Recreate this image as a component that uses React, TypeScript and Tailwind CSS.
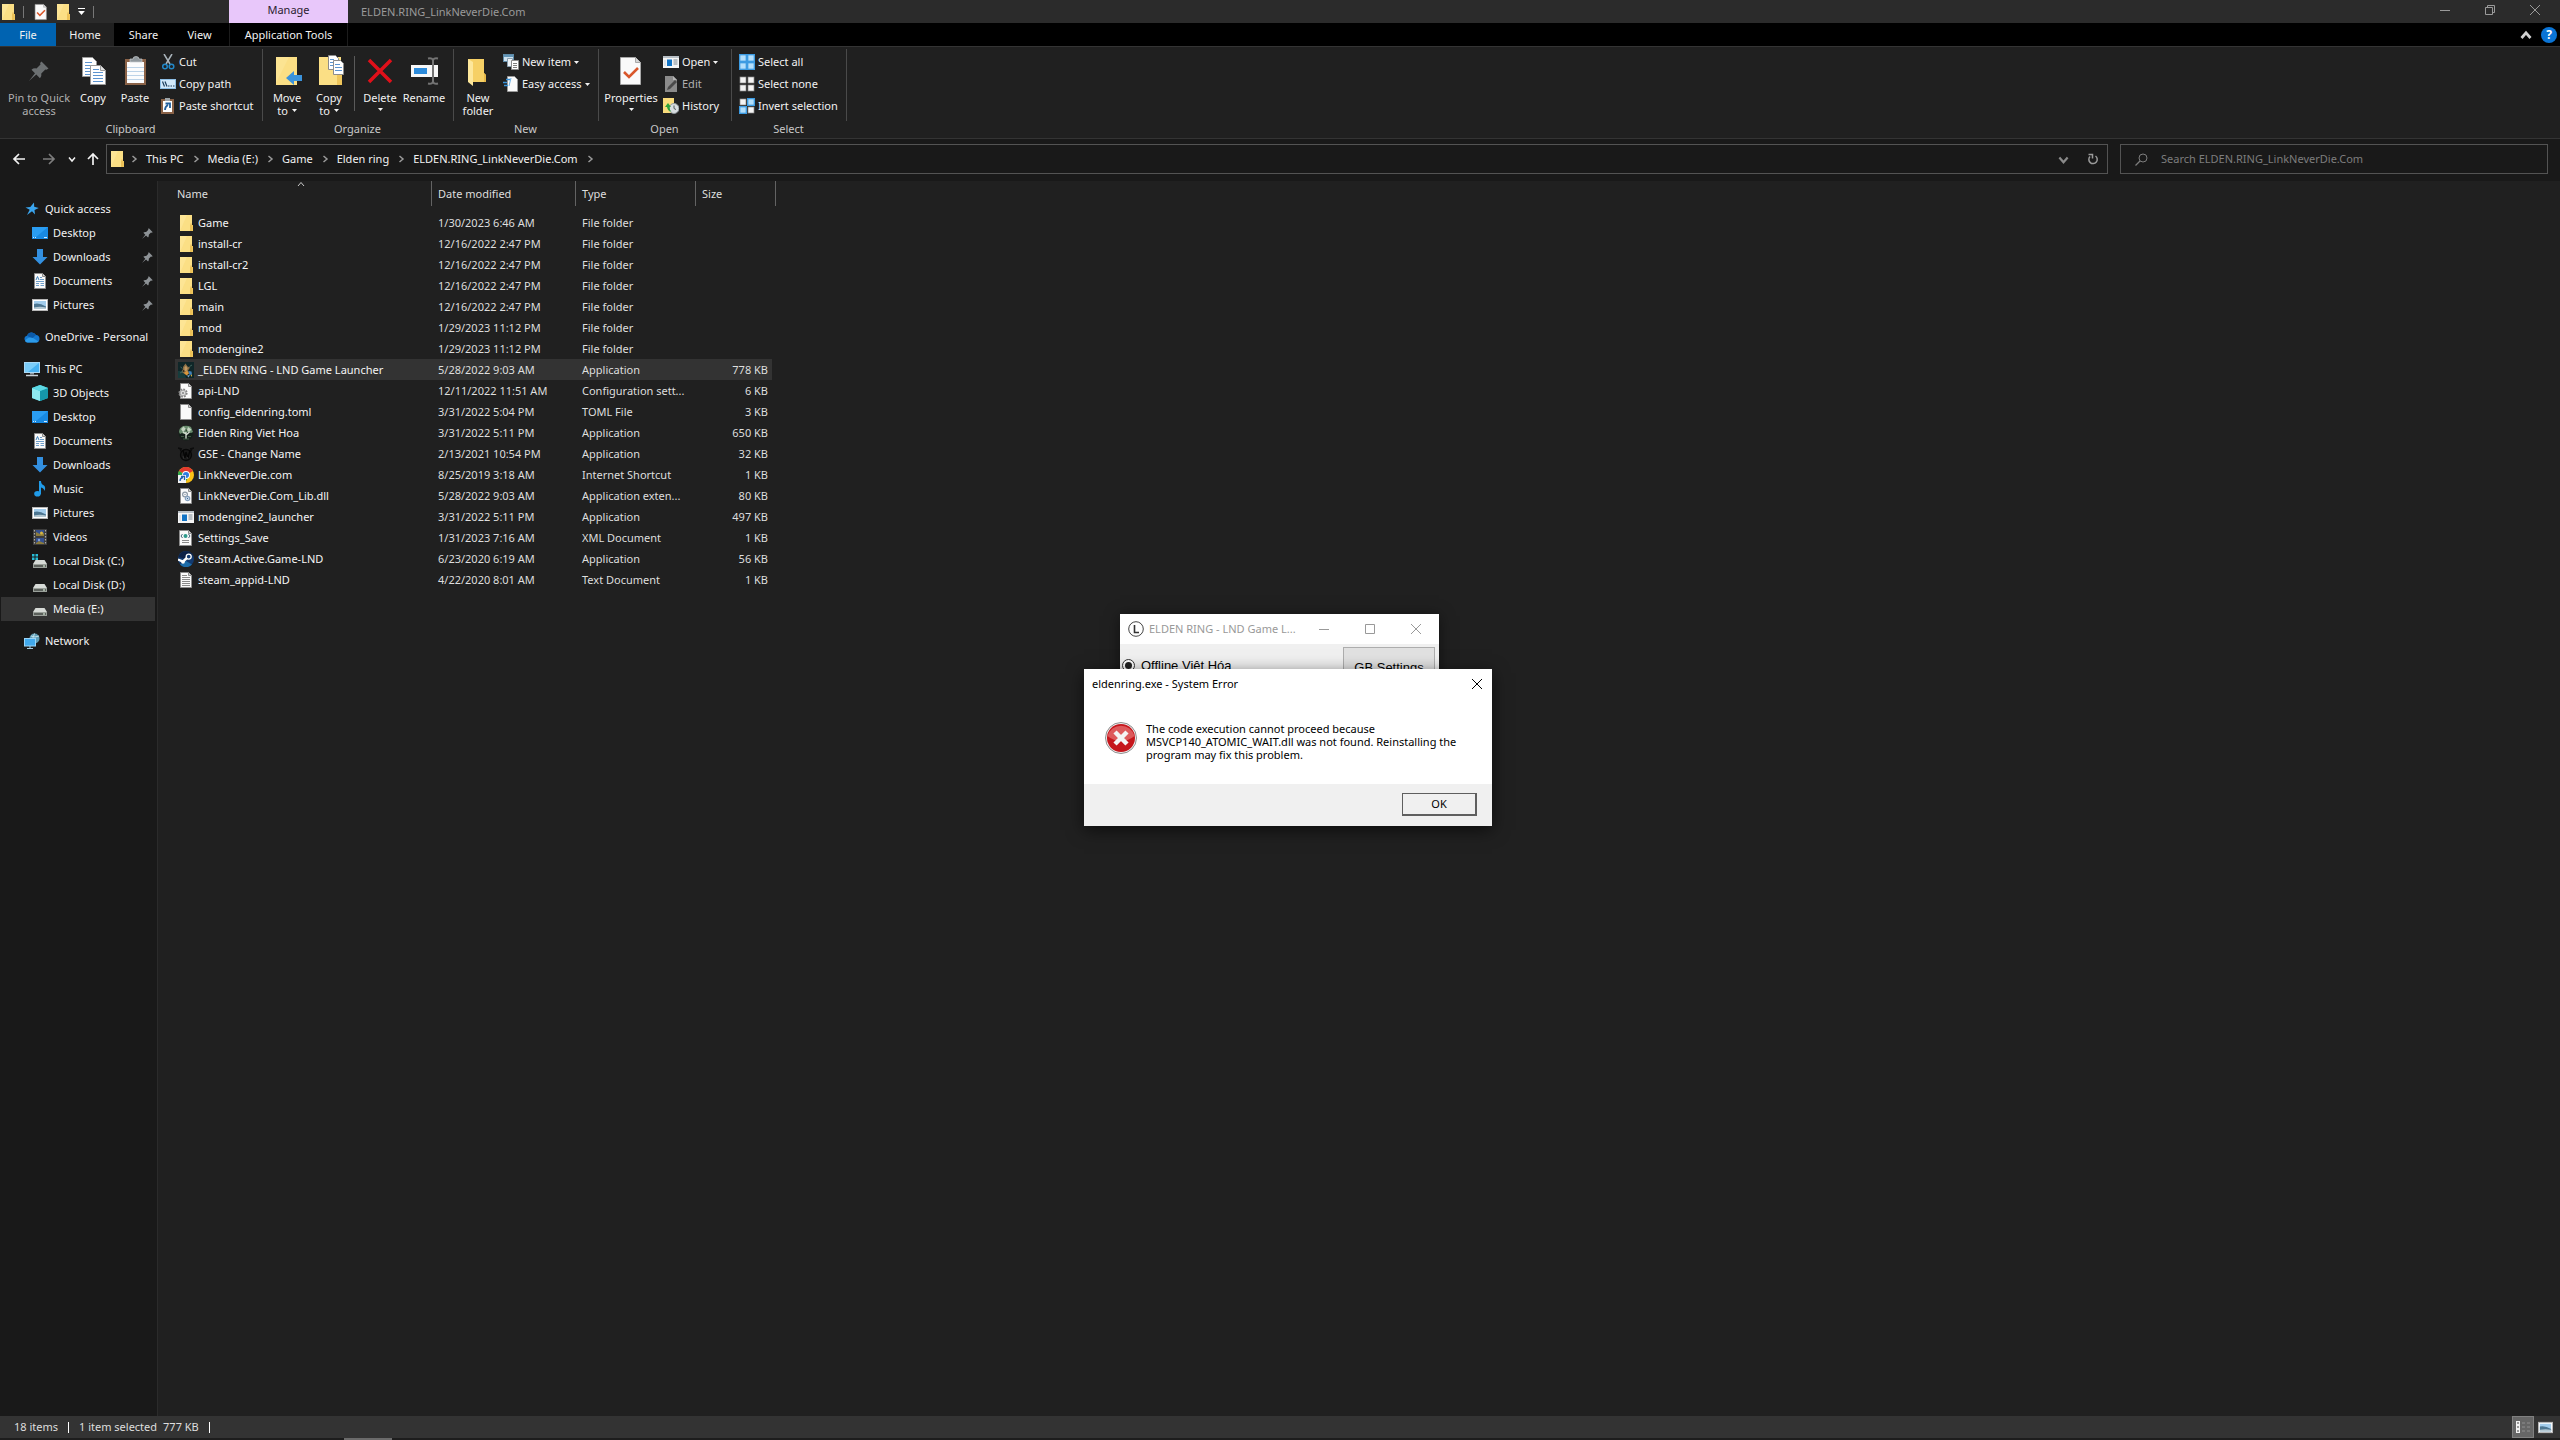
import type { ReactNode } from "react";

type IconProps = { className?: string };

/* ---------- small drawings ---------- */

function FolderIcon({ className = "w-4 h-4" }: IconProps) {
  return (
    <svg className={className} viewBox="0 0 16 16" aria-hidden="true">
      <rect x="2" y="0" width="12" height="16" fill="#fbdf85" />
      <path d="M2 0H9L2 16Z" fill="#fde79b" opacity=".7" />
      <path d="M12 10h3v6h-3z" fill="#f0c75c" />
      <path d="M12 8.500h2V16h-2z" fill="#e9bd53" opacity=".6" />
    </svg>
  );
}

function PageShape({ children, edge = "#8c8c8c" }: { children?: ReactNode; edge?: string }) {
  return (
    <>
      <path d="M2.500 .5h8l3 3v12h-11z" fill="#fafafa" stroke={edge} />
      <path d="M10.500 .5v3h3" fill="#d4d4d4" stroke={edge} />
      {children}
    </>
  );
}

function DocIcon({ className = "w-4 h-4" }: IconProps) {
  return (
    <svg className={className} viewBox="0 0 16 16" aria-hidden="true">
      <PageShape />
    </svg>
  );
}

function TextDocIcon() {
  return (
    <svg className="w-4 h-4" viewBox="0 0 16 16" aria-hidden="true">
      <PageShape>
        <path d="M4 3.500h5M4 5.500h8M4 7.500h8M4 9.500h8M4 11.500h8M4 13.500h8" stroke="#8a8a8a" />
      </PageShape>
    </svg>
  );
}

function ConfigIcon() {
  return (
    <svg className="w-4 h-4" viewBox="0 0 16 16" aria-hidden="true">
      <PageShape />
      <circle cx="5" cy="10" r="3.600" fill="#d9d9d9" stroke="#858585" strokeWidth="2" strokeDasharray="1.700 1.100" />
      <circle cx="5" cy="10" r="2.800" fill="#dcdcdc" stroke="#8b8b8b" strokeWidth=".6" />
      <circle cx="5" cy="10" r="1.100" fill="#8b8b8b" />
    </svg>
  );
}

function DllIcon() {
  return (
    <svg className="w-4 h-4" viewBox="0 0 16 16" aria-hidden="true">
      <PageShape>
        <circle cx="7" cy="6.500" r="2.400" fill="none" stroke="#8d99a5" strokeWidth="1.200" />
        <circle cx="7" cy="6.500" r=".7" fill="#8296a8" />
        <circle cx="9.500" cy="10.500" r="2.200" fill="#dbe7f3" stroke="#86a0bd" strokeWidth="1.200" />
        <circle cx="9.500" cy="10.500" r=".7" fill="#3f6d9c" />
      </PageShape>
    </svg>
  );
}

function XmlIcon() {
  return (
    <svg className="w-4 h-4" viewBox="0 0 16 16" aria-hidden="true">
      <path d="M1.500 .5h9l3 3v12h-12z" fill="#fafafa" stroke="#8c8c8c" />
      <path d="M10.500 .5v3h3" fill="#d4d4d4" stroke="#8c8c8c" />
      <circle cx="7.500" cy="6" r="2" fill="#2e9a8c" />
      <path d="M4.500 4L3 6l1.500 2M10.500 4L12 6l-1.500 2" fill="none" stroke="#44627a" />
      <path d="M4 10.500h7M4 12.500h7" stroke="#8a8a8a" />
    </svg>
  );
}

function AppIcon({ className = "w-4 h-4" }: IconProps) {
  return (
    <svg className={className} viewBox="0 0 16 16" aria-hidden="true">
      <rect x="0" y="2" width="16" height="12" fill="#f5f5f5" />
      <rect x="0" y="2" width="16" height="2" fill="#b9c0c6" />
      <rect x="4" y="5.500" width="5" height="6.500" fill="#1274c5" />
      <path d="M10.500 6h4M10.500 8h4M10.500 10h4" stroke="#7f8a94" />
      <path d="M1 6h2v6H1z" fill="#dfe3e7" />
    </svg>
  );
}

function EldenIcon() {
  return (
    <svg className="w-4 h-4" viewBox="0 0 16 16" aria-hidden="true">
      <rect width="16" height="16" fill="#0f2628" />
      <path d="M0 9h6l2 7H0z" fill="#163c3c" />
      <path d="M7.500 1.500l2 3 2.500 1-2 3 1 2-3 2-2-1-2.500-1.500 1.500-3L5 5z" fill="#8b6f46" />
      <path d="M6.500 5.500l1.500-2 1.500 3-1 2.500h-2z" fill="#c19a63" />
      <path d="M2.500 5l2 1.500M11.500 4.500L14 3M2 11l3-1.500" stroke="#40655c" />
      <path d="M6 11l3-2.500 2 3L8.500 13.500z" fill="#d9963c" />
      <path d="M10.500 9l3 .5.5 3-2.500.5z" fill="#3f82bd" />
      <path d="M9 13.500l3-.5-1.500 2.500z" fill="#77a2c4" />
      <path d="M12.500 13l1.500-.500V15z" fill="#d9b23c" />
      <path d="M5 8l2 1-2 1z" fill="#22180f" />
    </svg>
  );
}

function TreeIcon() {
  return (
    <svg className="w-4 h-4" viewBox="0 0 16 16" aria-hidden="true">
      <circle cx="8" cy="8" r="7.500" fill="#14201a" />
      <path d="M1 7q0-4 4-6 5-1 8 1l2 5-2 1-3-1-2 1-2 1-2-1-2 1z" fill="#6a8c6e" />
      <path d="M3 4l2.500-2.500L8 4 5 7zM10 2l3.500 2.500L11 7 9 5z" fill="#c4d4c1" />
      <path d="M7.500 4l1.500 1-1 2z" fill="#20331f" />
      <path d="M8 7v7M8 10l3.500-3M8 9L5 7" stroke="#d5e0d2" strokeWidth="1.300" fill="none" />
      <path d="M3 11.500h3M10 11.500h3M5 14h6" stroke="#3d573f" />
    </svg>
  );
}

function GseIcon() {
  return (
    <svg className="w-4 h-4" viewBox="0 0 16 16" aria-hidden="true">
      <path d="M0 2l4 1M16 2l-4 1M2 3l2 4M14 3l-2 4" stroke="#0c0c0c" strokeWidth="1.300" />
      <circle cx="8" cy="9" r="5.500" fill="#191919" stroke="#080808" strokeWidth="1.300" />
      <path d="M5 4l2 8 1-6 2 6 2-8" fill="none" stroke="#050505" strokeWidth="1.300" />
      <path d="M5 10l1 3M9 11l1 2" stroke="#303030" />
    </svg>
  );
}

function ChromeIcon() {
  return (
    <svg className="w-4 h-4" viewBox="0 0 16 16" aria-hidden="true">
      <circle cx="8" cy="8" r="8" fill="#fbc116" />
      <path d="M8 8L1 4A8 8 0 0 1 15 4Z" fill="#e33b2e" />
      <path d="M8 8L1 4a8 8 0 0 0 6 12l3.500-6z" fill="#2da94f" />
      <circle cx="8" cy="8" r="3.900" fill="#fff" />
      <circle cx="8" cy="8" r="3" fill="#2f7de1" />
      <rect x="0" y="8" width="8" height="8" fill="#f4f4f4" />
      <path d="M2 14q0-3 3-3.500M3 9.500h3.500V13" fill="none" stroke="#2563b0" strokeWidth="1.300" />
    </svg>
  );
}

function SteamIcon() {
  return (
    <svg className="w-4 h-4" viewBox="0 0 16 16" aria-hidden="true">
      <circle cx="8" cy="8" r="8" fill="#123a70" />
      <path d="M.5 6A8 8 0 0 1 15 4L8 8z" fill="#0c2147" />
      <path d="M2 13.500a8 8 0 0 0 12 0L8 10z" fill="#1b6ba8" />
      <path d="M0 8.500l5 2 5-4.500" fill="none" stroke="#fff" strokeWidth="2.400" />
      <circle cx="10.700" cy="5.600" r="2.500" fill="#123a70" stroke="#fff" strokeWidth="1.300" />
      <circle cx="5" cy="10.800" r="1.900" fill="#fff" />
    </svg>
  );
}

function StarIcon() {
  return (
    <svg className="w-4 h-4" viewBox="0 0 16 16" aria-hidden="true">
      <path d="M10 1.500l.2 4.300 4.600 1.200-4.300 2 .5 4.400-3-3.200-5 3.800 2.700-5.200L1.500 6.500l4.800-.5z" fill="#3aa5ee" />
    </svg>
  );
}

function DesktopIcon() {
  return (
    <svg className="w-4 h-4" viewBox="0 0 16 16" aria-hidden="true">
      <rect x="0" y="2" width="16" height="12" fill="#1889e2" />
      <path d="M0 2h16L4 12H0z" fill="#2a9df2" />
      <path d="M1 12.500h1M3 12.500h1M12 12.500h3" stroke="#cfe9ff" />
    </svg>
  );
}

function DownloadIcon() {
  return (
    <svg className="w-4 h-4" viewBox="0 0 16 16" aria-hidden="true">
      <path d="M5 0h6v8h4.500L8 15.500.5 8H5z" fill="#3390e0" />
    </svg>
  );
}

function DocumentsIcon() {
  return (
    <svg className="w-4 h-4" viewBox="0 0 16 16" aria-hidden="true">
      <PageShape>
        <path d="M8 4.500h2M8 6.500h4M4 8.500h8M4 10.500h3M4 12.500h3M8.500 12.500H12M8.500 10.500H12" stroke="#5c93c4" strokeWidth=".9" />
        <path d="M4 7l1.500-3.500L7 7" fill="none" stroke="#2f78b8" strokeWidth=".9" />
      </PageShape>
    </svg>
  );
}

function PicturesIcon({ className = "w-4 h-4" }: IconProps) {
  return (
    <svg className={className} viewBox="0 0 16 16" aria-hidden="true">
      <rect x=".5" y="2.500" width="15" height="11" fill="#fff" stroke="#b7b7b7" />
      <rect x="2" y="4" width="12" height="8" fill="#a3cdec" />
      <path d="M2 7q5-1.500 12 2.500V12H2z" fill="#4d7691" />
      <path d="M2 10.500q6-1.500 12 0V12H2z" fill="#b4c8d2" />
    </svg>
  );
}

function CloudIcon() {
  return (
    <svg className="w-4 h-4" viewBox="0 0 16 16" aria-hidden="true">
      <path d="M3.500 13.500a3.500 3.500 0 0 1-.6-6.800A5 5 0 0 1 12 6a3.800 3.800 0 0 1 .5 7.500z" fill="#1477cf" />
      <path d="M3 6.700A5 5 0 0 1 12 6L8 9.500z" fill="#0c5aa8" />
      <path d="M1 12q3-5 8-3l5.500 3.500q-1 1-2 1h-9Q2 13.500 1 12z" fill="#2c9bea" />
    </svg>
  );
}

function PcIcon() {
  return (
    <svg className="w-4 h-4" viewBox="0 0 16 16" aria-hidden="true">
      <rect x=".5" y="1.500" width="15" height="10" fill="#46b1f1" stroke="#a9d9f6" />
      <path d="M1 2h14L4 11H1z" fill="#7accf8" />
      <path d="M6 12h4v1.500H6z" fill="#8f9aa3" />
      <path d="M2 14.500h12" stroke="#c9d1d7" strokeWidth="1.500" />
    </svg>
  );
}

function CubeIcon() {
  return (
    <svg className="w-4 h-4" viewBox="0 0 16 16" aria-hidden="true">
      <path d="M8 0l8 3v10l-8 3-8-3V3z" fill="#39c4d4" />
      <path d="M0 3l8 3v10l-8-3z" fill="#8ee9ef" />
      <path d="M8 6l8-3v10l-8 3z" fill="#1597ab" />
      <path d="M8 0l8 3-8 3-8-3z" fill="#5dd8e4" />
    </svg>
  );
}

function MusicIcon() {
  return (
    <svg className="w-4 h-4" viewBox="0 0 16 16" aria-hidden="true">
      <ellipse cx="5.500" cy="12.800" rx="3.300" ry="2.800" fill="#209be8" />
      <path d="M7 0h2q0 3 3 4.500 2 2 .5 5.500-.5-3-3.500-3.500V13H7z" fill="#209be8" />
    </svg>
  );
}

function VideoIcon() {
  return (
    <svg className="w-4 h-4" viewBox="0 0 16 16" aria-hidden="true">
      <rect x="1" y="0" width="14" height="16" fill="#3c3c3c" />
      <path d="M2.500 1v14M13.500 1v14" stroke="#a9a9a9" strokeWidth="1.200" strokeDasharray="1.500 1.500" />
      <rect x="4" y="1" width="8" height="6" fill="#35508f" />
      <rect x="4" y="9" width="8" height="6" fill="#35508f" />
      <path d="M4 3l4 2 4-1v3H4zM4 14l3-2 5 2v1H4z" fill="#8b7b3c" />
      <circle cx="9.500" cy="4" r="1.500" fill="#d9b63e" />
      <circle cx="7" cy="11" r="1.200" fill="#7f9ed8" />
    </svg>
  );
}

function DiskIcon({ system = false }: { system?: boolean }) {
  return (
    <svg className="w-4 h-4" viewBox="0 0 16 16" aria-hidden="true">
      <path d="M3.500 7h9L15 11H1z" fill="#d6dad6" />
      <rect x="1" y="11" width="14" height="4" fill="#9aa09a" />
      <rect x="2" y="12" width="12" height="2" fill="#5b605b" />
      <path d="M11 13h2" stroke="#e9ffe9" />
      {system && <path d="M0 1h2.500v2.500H0zM3.500 1H6v2.500H3.500zM0 4.500h2.500V7H0zM3.500 4.500H6V7H3.500z" fill="#28bdd8" />}
    </svg>
  );
}

function NetworkIcon() {
  return (
    <svg className="w-4 h-4" viewBox="0 0 16 16" aria-hidden="true">
      <circle cx="10.500" cy="5.500" r="5" fill="#5f9db5" />
      <path d="M7 3q4 2 8 0M10.500.5q-3 4 0 9" stroke="#c3e2ec" fill="none" />
      <rect x=".5" y="5.500" width="11" height="7.500" fill="#41a9ec" stroke="#9bd5f8" />
      <path d="M3 15.500h6M6 13v2" stroke="#a7cfe5" />
    </svg>
  );
}

function PinIcon({ className = "w-3 h-3" }: IconProps) {
  return (
    <svg className={className} viewBox="0 0 20 20" aria-hidden="true">
      <path d="M12.500.5l7 7-2 1.300-1.200-.4-4 4q.6 3-1.300 4.800l-3.700-3.700L0 20l6-7.800-3.500-3.500q2-1.900 5-1.300l4-4-.4-1.400z" fill="#8d9296" />
    </svg>
  );
}

/* ribbon icons */

function CopyIcon() {
  return (
    <svg className="w-8 h-8" viewBox="0 0 32 32" aria-hidden="true">
      <path d="M5.500 2.500h10l4 4v15h-14z" fill="#fff" stroke="#9a9a9a" />
      <path d="M8 7.500h7M8 10.500h9M8 13.500h9M8 16.500h9M8 19.500h9" stroke="#5d94cf" />
      <path d="M13.500 10.500h10l5 5v14h-15z" fill="#fff" stroke="#9a9a9a" />
      <path d="M23.500 10.500v5h5" fill="#e0e0e0" stroke="#9a9a9a" />
      <path d="M16 14.500h6M16 17.500h10M16 20.500h10M16 23.500h10M16 26.500h10" stroke="#5d94cf" />
    </svg>
  );
}

function PasteIcon() {
  return (
    <svg className="w-8 h-8" viewBox="0 0 32 32" aria-hidden="true">
      <rect x="6" y="4" width="21" height="26" fill="#8a6247" />
      <rect x="8" y="7" width="17" height="21" fill="#fbfcfd" />
      <path d="M8 12.500h17M8 16.500h17M8 20.500h17M8 24.500h17" stroke="#bcd3e8" />
      <path d="M11 7V4h3q0-2.500 3-2.500T20 4h3v3z" fill="#8e969b" stroke="#c7cccf" strokeWidth=".7" />
    </svg>
  );
}

function CutIcon() {
  return (
    <svg className="w-4 h-4" viewBox="0 0 16 16" aria-hidden="true">
      <path d="M4 0l6 10M12 0L6 10" stroke="#a9b3ba" strokeWidth="1.500" />
      <circle cx="5" cy="12.500" r="2.300" fill="none" stroke="#2287c7" strokeWidth="1.500" />
      <circle cx="11.500" cy="12.500" r="2.300" fill="none" stroke="#2287c7" strokeWidth="1.500" />
    </svg>
  );
}

function CopyPathIcon() {
  return (
    <svg className="w-4 h-4" viewBox="0 0 16 16" aria-hidden="true">
      <rect x=".5" y="3.500" width="15" height="9" fill="#d2e8fa" stroke="#8fbfe6" />
      <path d="M2.500 5.500l2 5M5 5.500l2 5M8 10h1.500M10.500 10H12M13 10h1.500" stroke="#1d3d5c" strokeWidth="1.200" />
    </svg>
  );
}

function PasteShortcutIcon() {
  return (
    <svg className="w-4 h-4" viewBox="0 0 16 16" aria-hidden="true">
      <rect x="1" y="1" width="13" height="15" fill="#8a6247" />
      <rect x="3" y="3" width="9" height="11" fill="#fff" />
      <rect x="5" y="0" width="5" height="3" fill="#9da4a8" />
      <path d="M5 12q0-3.500 3-5M5.500 5.500H10V10" fill="none" stroke="#215f9d" strokeWidth="1.800" />
    </svg>
  );
}

function MoveToIcon() {
  return (
    <svg className="w-8 h-8" viewBox="0 0 32 32" aria-hidden="true">
      <rect x="5" y="2" width="21" height="28" fill="#fbdf85" />
      <path d="M5 2h13L5 28z" fill="#fde79b" opacity=".6" />
      <path d="M15 23l8-7v4h8v6h-8v4z" fill="#3b93dc" />
    </svg>
  );
}

function CopyToIcon() {
  return (
    <svg className="w-8 h-8" viewBox="0 0 32 32" aria-hidden="true">
      <rect x="6" y="2" width="22" height="28" fill="#fbdf85" />
      <path d="M24 19h5v11h-5z" fill="#efc65b" />
      <path d="M15.500.5h7l3 3v11h-10z" fill="#fff" stroke="#8c8c8c" />
      <path d="M20.500 5.500h7l3 3v11h-10z" fill="#fff" stroke="#8c8c8c" />
      <path d="M17 4.500h4M17 7.500h3M17 10.500h3M22 9.500h5M22 12.500h7M22 15.500h7" stroke="#5d94cf" />
    </svg>
  );
}

function DeleteIcon() {
  return (
    <svg className="w-8 h-8" viewBox="0 0 32 32" aria-hidden="true">
      <path d="M5 5l22 22M27 5L5 27" stroke="#e0101a" strokeWidth="3.500" />
    </svg>
  );
}

function RenameIcon() {
  return (
    <svg className="w-8 h-8" viewBox="0 0 32 32" aria-hidden="true">
      <rect x="3" y="10" width="27" height="12" fill="#f7f7f7" />
      <rect x="6" y="13" width="13" height="6" fill="#2c8bdb" />
      <path d="M25 4v24M20 3.500q5-1 5 2.500 0-3.500 5-2.500M20 28.500q5 1 5-2.500 0 3.500 5 2.500" stroke="#747474" strokeWidth="2" fill="none" />
    </svg>
  );
}

function NewFolderIcon() {
  return (
    <svg className="w-8 h-8" viewBox="0 0 32 32" aria-hidden="true">
      <path d="M6 4h16v14l2 2v7H10z" fill="#f6d065" />
      <path d="M6 4l5 3v24l-5-4z" fill="#fde79b" />
      <path d="M22 18l2 2v7h-2z" fill="#e7b948" />
    </svg>
  );
}

function PropertiesIcon({ className = "w-8 h-8" }: IconProps) {
  return (
    <svg className={className} viewBox="0 0 32 32" aria-hidden="true">
      <path d="M5.500 2.500h15l5 5v22h-20z" fill="#fafafa" stroke="#a8a8a8" />
      <path d="M20.500 2.500v5h5" fill="#d5d5d5" stroke="#a8a8a8" />
      <path d="M9 17l5 5 9-9" fill="none" stroke="#d9572b" strokeWidth="2.600" />
    </svg>
  );
}

function NewItemIcon() {
  return (
    <svg className="w-4 h-4" viewBox="0 0 16 16" aria-hidden="true">
      <rect x=".5" y=".5" width="10" height="7" fill="#cfe3f0" stroke="#5f8ba8" />
      <path d="M1 2h9" stroke="#3f7ca6" strokeWidth="1.500" />
      <path d="M4.500 4.500h5v8h-5z" fill="#eef3f7" stroke="#8aa0b0" />
      <path d="M8.500 6.500h7v9h-7z" fill="#fff" stroke="#8c8c8c" />
      <path d="M10 9.500h4M10 11.500h4M10 13.500h4" stroke="#7f7f7f" />
    </svg>
  );
}

function EasyAccessIcon() {
  return (
    <svg className="w-4 h-4" viewBox="0 0 16 16" aria-hidden="true">
      <path d="M4.500 .5h7l3 3v12h-10z" fill="#fafafa" stroke="#9a9a9a" />
      <path d="M0 6.500h4M1 9.500h4M3 3.500h4" stroke="#3a93d8" strokeWidth="1.300" />
      <path d="M8 2l-2 8" stroke="#6fb3e6" />
    </svg>
  );
}

function EditIcon() {
  return (
    <svg className="w-4 h-4" viewBox="0 0 16 16" aria-hidden="true">
      <path d="M2 0h8l4 4v12H2z" fill="#8b8b8b" />
      <path d="M4 14l1-3 7-7 2 2-7 7z" fill="#4a4a4a" />
      <path d="M10 0v4h4" fill="#b5b5b5" />
    </svg>
  );
}

function HistoryIcon() {
  return (
    <svg className="w-4 h-4" viewBox="0 0 16 16" aria-hidden="true">
      <rect x="0" y="0" width="11" height="15" fill="#f9dc7c" />
      <circle cx="11" cy="10.500" r="5" fill="#d7dde0" stroke="#8f979c" />
      <path d="M11 7.500v3l2 1" fill="none" stroke="#51575b" />
      <path d="M2 9l3-4 3 4H6.500q0 3 2 4.500-4-.5-4.500-4.500z" fill="#2da43a" />
    </svg>
  );
}

function SelectIcon({ pattern }: { pattern: "all" | "none" | "invert" }) {
  const blue = "#b4dffb";
  const white = "#f4f4f4";
  const fills = { all: [blue, blue, blue, blue], none: [white, white, white, white], invert: [white, blue, blue, white] }[pattern];
  const spots = [
    [1, 1],
    [9, 1],
    [1, 9],
    [9, 9],
  ];
  return (
    <svg className="w-4 h-4" viewBox="0 0 16 16" aria-hidden="true">
      {spots.map(([x, y], i) => (
        <g key={i}>
          {fills[i] === blue && <rect x={x - 1} y={y - 1} width="8" height="8" fill="#3d9be2" />}
          <rect x={x} y={y} width="6" height="6" fill={fills[i]} stroke={fills[i] === blue ? "#3d9be2" : "#8b8b8b"} strokeWidth=".7" />
        </g>
      ))}
    </svg>
  );
}

function Chevron({ dir, className = "w-2 h-2", stroke = 1.5 }: { dir: "up" | "down" | "right"; className?: string; stroke?: number }) {
  const d = { up: "M1 6l3-3.500L7 6", down: "M1 2.500L4 6l3-3.500", right: "M2.500 1L6 4 2.500 7" }[dir];
  return (
    <svg className={className} viewBox="0 0 8 8" aria-hidden="true">
      <path d={d} fill="none" stroke="currentColor" strokeWidth={stroke} />
    </svg>
  );
}

function Caret({ className = "w-[5px] h-[3px]" }: IconProps) {
  return (
    <svg className={`shrink-0 ${className}`} viewBox="0 0 5 3" aria-hidden="true">
      <path d="M0 0h5L2.500 3z" fill="currentColor" />
    </svg>
  );
}

function ArrowIcon({ dir }: { dir: "left" | "right" | "up" }) {
  const d = { left: "M7 2L2 7l5 5M2 7h11", right: "M7 2l5 5-5 5M12 7H1", up: "M2 7l5-5 5 5M7 2v11" }[dir];
  return (
    <svg className="w-[14px] h-[14px]" viewBox="0 0 14 14" aria-hidden="true">
      <path d={d} fill="none" stroke="currentColor" strokeWidth="1.700" />
    </svg>
  );
}

function WindowGlyph({ kind }: { kind: "min" | "max" | "restore" | "close" }) {
  const d = {
    min: "M0 5.500h10",
    max: "M.5 .5h9v9h-9z",
    restore: "M.5 2.500h7v7h-7zM2.500 2.500v-2h7v7h-2",
    close: "M0 0l10 10M10 0L0 10",
  }[kind];
  return (
    <svg className="w-[10px] h-[10px]" viewBox="0 0 10 10" aria-hidden="true">
      <path d={d} fill="none" stroke="currentColor" strokeWidth="1" />
    </svg>
  );
}

/* ---------- title bar and ribbon ---------- */

function TitleBar() {
  return (
    <header className="flex h-[23px] shrink-0 items-stretch bg-[#2b2b2b] text-[#9a9a9a]">
      <div className="flex w-[229px] items-center">
        <FolderIcon />
        <span className="ml-[7px] h-3 w-px bg-[#777]" />
        <button aria-label="Properties" className="ml-2">
          <PropertiesIcon className="h-[18px] w-[18px]" />
        </button>
        <button aria-label="New folder" className="ml-[5px]">
          <FolderIcon />
        </button>
        <button aria-label="Customize Quick Access Toolbar" className="ml-[2px] flex w-4 flex-col items-center gap-[2px] text-white">
          <span className="h-px w-[7px] bg-white" />
          <Caret className="h-[4px] w-[7px]" />
        </button>
        <span className="ml-1 h-3 w-px bg-[#777]" />
      </div>
      <div className="flex w-[119px] items-start justify-center bg-[#e8c7fa] pt-[2px] leading-4 text-[#2b2230]">Manage</div>
      <h1 className="flex-1 truncate pl-[13px] leading-[23px]">ELDEN.RING_LinkNeverDie.Com</h1>
      <div className="flex pr-[3px]">
        {(["min", "restore", "close"] as const).map((k) => (
          <button key={k} aria-label={k} className="flex h-5 w-[45px] items-center justify-center">
            <WindowGlyph kind={k} />
          </button>
        ))}
      </div>
    </header>
  );
}

function TabBar() {
  return (
    <nav className="flex h-[23px] shrink-0 items-stretch bg-black text-[#f2f2f2]">
      <button className="w-14 bg-[#0063b1] pt-px">File</button>
      <button className="w-[58px] bg-[#202020] pt-px">Home</button>
      <button className="w-[59px] pt-px">Share</button>
      <button className="w-[53px] pt-px">View</button>
      <button className="ml-[3px] w-[119px] border-x border-[#1c1c1c] pt-px">Application Tools</button>
      <div className="ml-auto flex items-center gap-[9px] pr-[3px] text-[#d0d0d0]">
        <button aria-label="Minimize the Ribbon">
          <Chevron dir="up" className="h-3 w-3" stroke={1.8} />
        </button>
        <button aria-label="Help" className="flex h-4 w-4 items-center justify-center rounded-full bg-[#0a74d6] text-[12px] leading-4 font-bold text-white">
          ?
        </button>
      </div>
    </nav>
  );
}

function BigButton({ icon, lines, width, dim, caret }: { icon: ReactNode; lines: string[]; width: string; dim?: boolean; caret?: "inline" | "below" }) {
  return (
    <button className={`flex flex-col items-center pt-[6px] leading-[13px] ${width} ${dim ? "text-[#b0b0b0]" : "text-[#f2f2f2]"}`}>
      <span className="mb-1 flex h-8 items-center">{icon}</span>
      {lines.map((line, i) => (
        <span key={line} className="flex items-center gap-1 whitespace-nowrap">
          {line}
          {caret === "inline" && i === lines.length - 1 && <Caret />}
        </span>
      ))}
      {caret === "below" && (
        <span className="flex h-[10px] items-center">
          <Caret />
        </span>
      )}
    </button>
  );
}

function SmallButton({ icon, label, caret, dim }: { icon: ReactNode; label: string; caret?: boolean; dim?: boolean }) {
  return (
    <button className={`flex h-[22px] items-center whitespace-nowrap ${dim ? "text-[#b0b0b0]" : "text-[#f2f2f2]"}`}>
      {icon}
      <span className="ml-[3px]">{label}</span>
      {caret && (
        <span className="ml-[3px]">
          <Caret />
        </span>
      )}
    </button>
  );
}

function Group({ title, width, children }: { title: string; width: string; children: ReactNode }) {
  return (
    <section className={`flex flex-col ${width}`}>
      <div className="mt-[2px] flex h-[72px] border-r border-[#4a4a4a]">{children}</div>
      <h2 className="pr-[2px] text-center leading-[15px] text-[#c8c8c8]">{title}</h2>
    </section>
  );
}

function Ribbon() {
  return (
    <div className="flex h-[93px] shrink-0 border-y border-[#343434] bg-[#202020]">
      <Group title="Clipboard" width="w-[263px]">
        <BigButton icon={<PinIcon className="h-5 w-5 opacity-70" />} lines={["Pin to Quick", "access"]} width="w-[74px] ml-[2px]" dim />
        <BigButton icon={<CopyIcon />} lines={["Copy"]} width="w-[34px]" />
        <BigButton icon={<PasteIcon />} lines={["Paste"]} width="w-[50px]" />
        <div className="pt-[2px]">
          <SmallButton icon={<CutIcon />} label="Cut" />
          <SmallButton icon={<CopyPathIcon />} label="Copy path" />
          <SmallButton icon={<PasteShortcutIcon />} label="Paste shortcut" />
        </div>
      </Group>
      <Group title="Organize" width="w-[191px]">
        <BigButton icon={<MoveToIcon />} lines={["Move", "to"]} caret="inline" width="w-[42px] ml-[3px]" />
        <BigButton icon={<CopyToIcon />} lines={["Copy", "to"]} caret="inline" width="w-[42px]" />
        <span className="mx-1 mt-[7px] h-[55px] w-px bg-[#5a5a5a]" />
        <BigButton icon={<DeleteIcon />} lines={["Delete"]} caret="below" width="w-[42px]" />
        <BigButton icon={<RenameIcon />} lines={["Rename"]} width="w-[46px]" />
      </Group>
      <Group title="New" width="w-[145px]">
        <BigButton icon={<NewFolderIcon />} lines={["New", "folder"]} width="w-[42px] ml-[3px]" />
        <div className="ml-1 pt-[2px]">
          <SmallButton icon={<NewItemIcon />} label="New item" caret />
          <SmallButton icon={<EasyAccessIcon />} label="Easy access" caret />
        </div>
      </Group>
      <Group title="Open" width="w-[133px]">
        <BigButton icon={<PropertiesIcon />} lines={["Properties"]} caret="below" width="w-[58px] ml-[3px]" />
        <div className="ml-[3px] pt-[2px]">
          <SmallButton icon={<AppIcon />} label="Open" caret />
          <SmallButton icon={<EditIcon />} label="Edit" dim />
          <SmallButton icon={<HistoryIcon />} label="History" />
        </div>
      </Group>
      <Group title="Select" width="w-[115px]">
        <div className="ml-[7px] pt-[2px]">
          <SmallButton icon={<SelectIcon pattern="all" />} label="Select all" />
          <SmallButton icon={<SelectIcon pattern="none" />} label="Select none" />
          <SmallButton icon={<SelectIcon pattern="invert" />} label="Invert selection" />
        </div>
      </Group>
    </div>
  );
}

/* ---------- address bar ---------- */

const crumbs = ["This PC", "Media (E:)", "Game", "Elden ring", "ELDEN.RING_LinkNeverDie.Com"];

function AddressRow() {
  return (
    <div className="flex h-[42px] shrink-0 items-start bg-[#191919] pt-[5px] pr-3 text-[#f2f2f2]">
      <div className="flex h-[30px] w-[106px] shrink-0 items-center pl-3">
        <button aria-label="Back">
          <ArrowIcon dir="left" />
        </button>
        <button aria-label="Forward" className="ml-4 text-[#7d7d7d]">
          <ArrowIcon dir="right" />
        </button>
        <button aria-label="Recent locations" className="ml-3">
          <Chevron dir="down" />
        </button>
        <button aria-label="Up" className="ml-[10px]">
          <ArrowIcon dir="up" />
        </button>
      </div>
      <div className="flex h-[30px] flex-1 items-center border border-[#535353] pl-[2px]">
        <FolderIcon className="mr-[3px] h-4 w-4" />
        <span className="flex w-3 justify-center text-[#9a9a9a]">
          <Chevron dir="right" />
        </span>
        {crumbs.map((c) => (
          <span key={c} className="flex items-center">
            <a href="#" className="ml-[3px] px-[3px] whitespace-nowrap">
              {c}
            </a>
            <span className="ml-[3px] flex w-3 justify-center text-[#9a9a9a]">
              <Chevron dir="right" />
            </span>
          </span>
        ))}
        <button aria-label="Previous locations" className="ml-auto flex h-full w-[30px] items-center justify-center text-[#8a8a8a]">
          <Chevron dir="down" className="h-[11px] w-[11px]" stroke={1.6} />
        </button>
        <button aria-label="Refresh" className="flex h-full w-[29px] items-center justify-center text-[#9a9a9a]">
          <svg className="h-3 w-3" viewBox="0 0 12 12" aria-hidden="true">
            <path d="M8.500 3A4.200 4.200 0 1 1 3 3.500M1.500 1.500h4v4" fill="none" stroke="currentColor" strokeWidth="1.500" />
          </svg>
        </button>
      </div>
      <label className="ml-3 flex h-[30px] w-[428px] shrink-0 items-center border border-[#535353] pl-[14px] text-[#7d7d7d]">
        <svg className="h-[13px] w-[13px]" viewBox="0 0 13 13" aria-hidden="true">
          <circle cx="8" cy="5" r="4" fill="none" stroke="currentColor" />
          <path d="M5 8L.5 12.500" stroke="currentColor" strokeWidth="1.200" />
        </svg>
        <input aria-label="Search" placeholder="Search ELDEN.RING_LinkNeverDie.Com" className="ml-[13px] min-w-0 flex-1 bg-transparent outline-none placeholder:text-[#7d7d7d]" />
      </label>
    </div>
  );
}

/* ---------- navigation pane ---------- */

type NavItem = { label: string; icon: ReactNode; root?: boolean; pinned?: boolean; active?: boolean };

const navGroups: NavItem[][] = [
  [
    { label: "Quick access", icon: <StarIcon />, root: true },
    { label: "Desktop", icon: <DesktopIcon />, pinned: true },
    { label: "Downloads", icon: <DownloadIcon />, pinned: true },
    { label: "Documents", icon: <DocumentsIcon />, pinned: true },
    { label: "Pictures", icon: <PicturesIcon />, pinned: true },
  ],
  [{ label: "OneDrive - Personal", icon: <CloudIcon />, root: true }],
  [
    { label: "This PC", icon: <PcIcon />, root: true },
    { label: "3D Objects", icon: <CubeIcon /> },
    { label: "Desktop", icon: <DesktopIcon /> },
    { label: "Documents", icon: <DocumentsIcon /> },
    { label: "Downloads", icon: <DownloadIcon /> },
    { label: "Music", icon: <MusicIcon /> },
    { label: "Pictures", icon: <PicturesIcon /> },
    { label: "Videos", icon: <VideoIcon /> },
    { label: "Local Disk (C:)", icon: <DiskIcon system /> },
    { label: "Local Disk (D:)", icon: <DiskIcon /> },
    { label: "Media (E:)", icon: <DiskIcon />, active: true },
  ],
  [{ label: "Network", icon: <NetworkIcon />, root: true }],
];

function NavPane() {
  return (
    <nav className="flex w-[158px] shrink-0 flex-col gap-2 border-r border-[#2b2b2b] bg-[#191919] pt-4 pr-[2px] pl-px text-[#f2f2f2]">
      {navGroups.map((items, g) => (
        <ul key={g}>
          {items.map((item) => (
            <li key={item.label}>
              <a href="#" className={`flex h-6 items-center gap-[5px] whitespace-nowrap ${item.root ? "pl-[23px]" : "pl-[31px]"} ${item.active ? "bg-[#333]" : ""}`}>
                {item.icon}
                {item.label}
                {item.pinned && <PinIcon className="mr-[2px] ml-auto h-[11px] w-[11px]" />}
              </a>
            </li>
          ))}
        </ul>
      ))}
    </nav>
  );
}

/* ---------- file list ---------- */

type FileRow = [icon: ReactNode, name: string, date: string, type: string, size: string];

const files: FileRow[] = [
  [<FolderIcon />, "Game", "1/30/2023 6:46 AM", "File folder", ""],
  [<FolderIcon />, "install-cr", "12/16/2022 2:47 PM", "File folder", ""],
  [<FolderIcon />, "install-cr2", "12/16/2022 2:47 PM", "File folder", ""],
  [<FolderIcon />, "LGL", "12/16/2022 2:47 PM", "File folder", ""],
  [<FolderIcon />, "main", "12/16/2022 2:47 PM", "File folder", ""],
  [<FolderIcon />, "mod", "1/29/2023 11:12 PM", "File folder", ""],
  [<FolderIcon />, "modengine2", "1/29/2023 11:12 PM", "File folder", ""],
  [<EldenIcon />, "_ELDEN RING - LND Game Launcher", "5/28/2022 9:03 AM", "Application", "778 KB"],
  [<ConfigIcon />, "api-LND", "12/11/2022 11:51 AM", "Configuration sett...", "6 KB"],
  [<DocIcon />, "config_eldenring.toml", "3/31/2022 5:04 PM", "TOML File", "3 KB"],
  [<TreeIcon />, "Elden Ring Viet Hoa", "3/31/2022 5:11 PM", "Application", "650 KB"],
  [<GseIcon />, "GSE - Change Name", "2/13/2021 10:54 PM", "Application", "32 KB"],
  [<ChromeIcon />, "LinkNeverDie.com", "8/25/2019 3:18 AM", "Internet Shortcut", "1 KB"],
  [<DllIcon />, "LinkNeverDie.Com_Lib.dll", "5/28/2022 9:03 AM", "Application exten...", "80 KB"],
  [<AppIcon />, "modengine2_launcher", "3/31/2022 5:11 PM", "Application", "497 KB"],
  [<XmlIcon />, "Settings_Save", "1/31/2023 7:16 AM", "XML Document", "1 KB"],
  [<SteamIcon />, "Steam.Active.Game-LND", "6/23/2020 6:19 AM", "Application", "56 KB"],
  [<TextDocIcon />, "steam_appid-LND", "4/22/2020 8:01 AM", "Text Document", "1 KB"],
];

function FileList() {
  return (
    <main className="min-w-0 flex-1 pl-[17px]">
      <table className="table-fixed border-collapse text-left">
        <colgroup>
          <col className="w-[257px]" />
          <col className="w-[144px]" />
          <col className="w-[120px]" />
          <col className="w-[76px]" />
          <col className="w-1" />
        </colgroup>
        <thead className="text-[#dedede]">
          <tr>
            {["Name", "Date modified", "Type"].map((h) => (
              <th key={h} className="h-[31px] p-0 align-top font-normal">
                <div className={`relative h-[25px] border-r border-[#636363] leading-[25px] ${h === "Name" ? "pl-[2px]" : "pl-[6px]"}`}>
                  {h}
                  {h === "Name" && <Chevron dir="up" className="absolute -top-px left-[122px] h-2 w-2" stroke={0.9} />}
                </div>
              </th>
            ))}
            <th colSpan={2} className="h-[31px] p-0 align-top font-normal">
              <div className="h-[25px] border-r border-[#636363] pl-[6px] leading-[25px]">Size</div>
            </th>
          </tr>
        </thead>
        <tbody className="text-[#dedede] [&_td]:h-[21px] [&_td]:py-0 [&_td]:leading-5 [&_td]:whitespace-nowrap">
          {files.map(([icon, name, date, type, size], i) => {
            const bg = i === 7 ? "bg-[#333]" : "";
            return (
              <tr key={name}>
                <td className={`pr-0 pl-[3px] text-[#f5f5f5] ${bg}`}>
                  <span className="flex items-center gap-1">
                    {icon}
                    {name}
                  </span>
                </td>
                <td className={`pr-0 pl-[6px] ${bg}`}>{date}</td>
                <td className={`pr-0 pl-[6px] ${bg}`}>{type}</td>
                <td className={`pr-1 pl-0 text-right ${bg}`}>{size}</td>
                <td className="p-0" />
              </tr>
            );
          })}
        </tbody>
      </table>
    </main>
  );
}

function StatusBar() {
  return (
    <footer className="shrink-0 bg-[#333] text-[#dedede]">
      <div className="flex h-[22px] items-center pl-[14px]">
        <span>18 items</span>
        <span className="ml-[10px] h-[11px] w-px bg-white" />
        <span className="ml-[10px]">1 item selected</span>
        <span className="ml-[6px]">777 KB</span>
        <span className="ml-[10px] h-[11px] w-px bg-white" />
        <div className="ml-auto flex items-center pr-1">
          <button aria-label="Details view" className="flex h-[22px] w-[22px] items-center justify-center border border-[#808080] bg-[#666]">
            <svg className="h-4 w-4" viewBox="0 0 16 16" aria-hidden="true">
              <path d="M1 2h4v12H1z" fill="#f2f2f2" />
              <path d="M2 3.500h2v1H2zM2 7.500h2v1H2zM2 11.500h2v1H2z" fill="#444" />
              <path d="M7 4h3M12 4h3M7 8h3M12 8h3M7 12h3M12 12h3" stroke="#8f8f8f" />
            </svg>
          </button>
          <button aria-label="Large icons view" className="flex h-[22px] w-[22px] items-center justify-center">
            <PicturesIcon className="h-[15px] w-[15px]" />
          </button>
        </div>
      </div>
      <div className="h-[2px] bg-[#1d1d1d] pl-[344px]">
        <div className="h-[2px] w-12 bg-[#6b6b6b]" />
      </div>
    </footer>
  );
}

/* ---------- floating windows ---------- */

function LauncherWindow() {
  return (
    <section className="absolute top-[614px] left-[1120px] w-[319px] bg-[#f0f0f0] shadow-[0_2px_14px_rgba(0,0,0,0.5)]">
      <header className="flex h-[30px] items-center bg-white pl-2 text-[#999]">
        <svg className="h-4 w-4" viewBox="0 0 16 16" aria-hidden="true">
          <circle cx="8" cy="8" r="7.300" fill="#fff" stroke="#444" />
          <path d="M6.500 4v7.500H11" fill="none" stroke="#333" strokeWidth="1.600" />
        </svg>
        <h2 className="ml-[5px] flex-1 whitespace-nowrap">ELDEN RING - LND Game L...</h2>
        {(["min", "max", "close"] as const).map((k) => (
          <button key={k} aria-label={k} className="flex h-[30px] w-[46px] items-center justify-center">
            <WindowGlyph kind={k} />
          </button>
        ))}
      </header>
      <div className="flex h-[60px] items-start justify-between pt-[3px] pr-1 pl-[2px] font-['Liberation_Sans',Arial,sans-serif] text-[13px] text-black">
        <label className="flex items-center pt-[9px] leading-[19px]">
          <input type="radio" defaultChecked className="peer sr-only" />
          <span className="mr-[6px] flex h-[13px] w-[13px] items-center justify-center rounded-full border border-[#333] bg-white">
            <span className="h-[7px] w-[7px] rounded-full bg-[#222]" />
          </span>
          Offline Việt Hóa
        </label>
        <button className="h-[42px] w-[92px] border border-[#adadad] bg-[#e1e1e1]">GB Settings</button>
      </div>
    </section>
  );
}

function ErrorDialog() {
  return (
    <section role="alertdialog" aria-labelledby="err-title" className="absolute top-[669px] left-[1084px] w-[408px] bg-white text-black shadow-[0_4px_16px_rgba(0,0,0,0.6)]">
      <header className="flex h-[30px] items-center justify-between pr-[10px] pl-2">
        <h2 id="err-title">eldenring.exe - System Error</h2>
        <button aria-label="Close">
          <WindowGlyph kind="close" />
        </button>
      </header>
      <div className="flex h-[85px] items-start gap-[9px] pt-[23px] pl-[21px]">
        <svg className="h-8 w-8" viewBox="0 0 32 32" aria-hidden="true">
          <circle cx="16" cy="16" r="15.500" fill="#f0f0f0" stroke="#8f8f8f" />
          <circle cx="16" cy="16" r="14" fill="#c5161c" />
          <path d="M2.500 14a14 14 0 0 1 27 0q-6 5-13.500 5T2.500 14z" fill="#dd5a5c" />
          <path d="M10 10l12 12M22 10L10 22" stroke="#f4f4f4" strokeWidth="4.500" />
        </svg>
        <p className="leading-[13px] whitespace-nowrap">
          The code execution cannot proceed because
          <br />
          MSVCP140_ATOMIC_WAIT.dll was not found. Reinstalling the
          <br />
          program may fix this problem.
        </p>
      </div>
      <footer className="flex h-[42px] items-start justify-end bg-[#f0f0f0] pt-[9px] pr-[15px]">
        <button className="h-[23px] w-[75px] border-t border-r-2 border-b-2 border-l border-[#5f5f5f] bg-[#f0f0f0]">OK</button>
      </footer>
    </section>
  );
}

export default function App() {
  return (
    <div className="relative flex h-screen flex-col overflow-hidden bg-[#202020] font-['Noto_Sans','Open_Sans',sans-serif] text-[11px]">
      <TitleBar />
      <TabBar />
      <Ribbon />
      <AddressRow />
      <div className="flex min-h-0 flex-1">
        <NavPane />
        <FileList />
      </div>
      <StatusBar />
      <LauncherWindow />
      <ErrorDialog />
    </div>
  );
}
